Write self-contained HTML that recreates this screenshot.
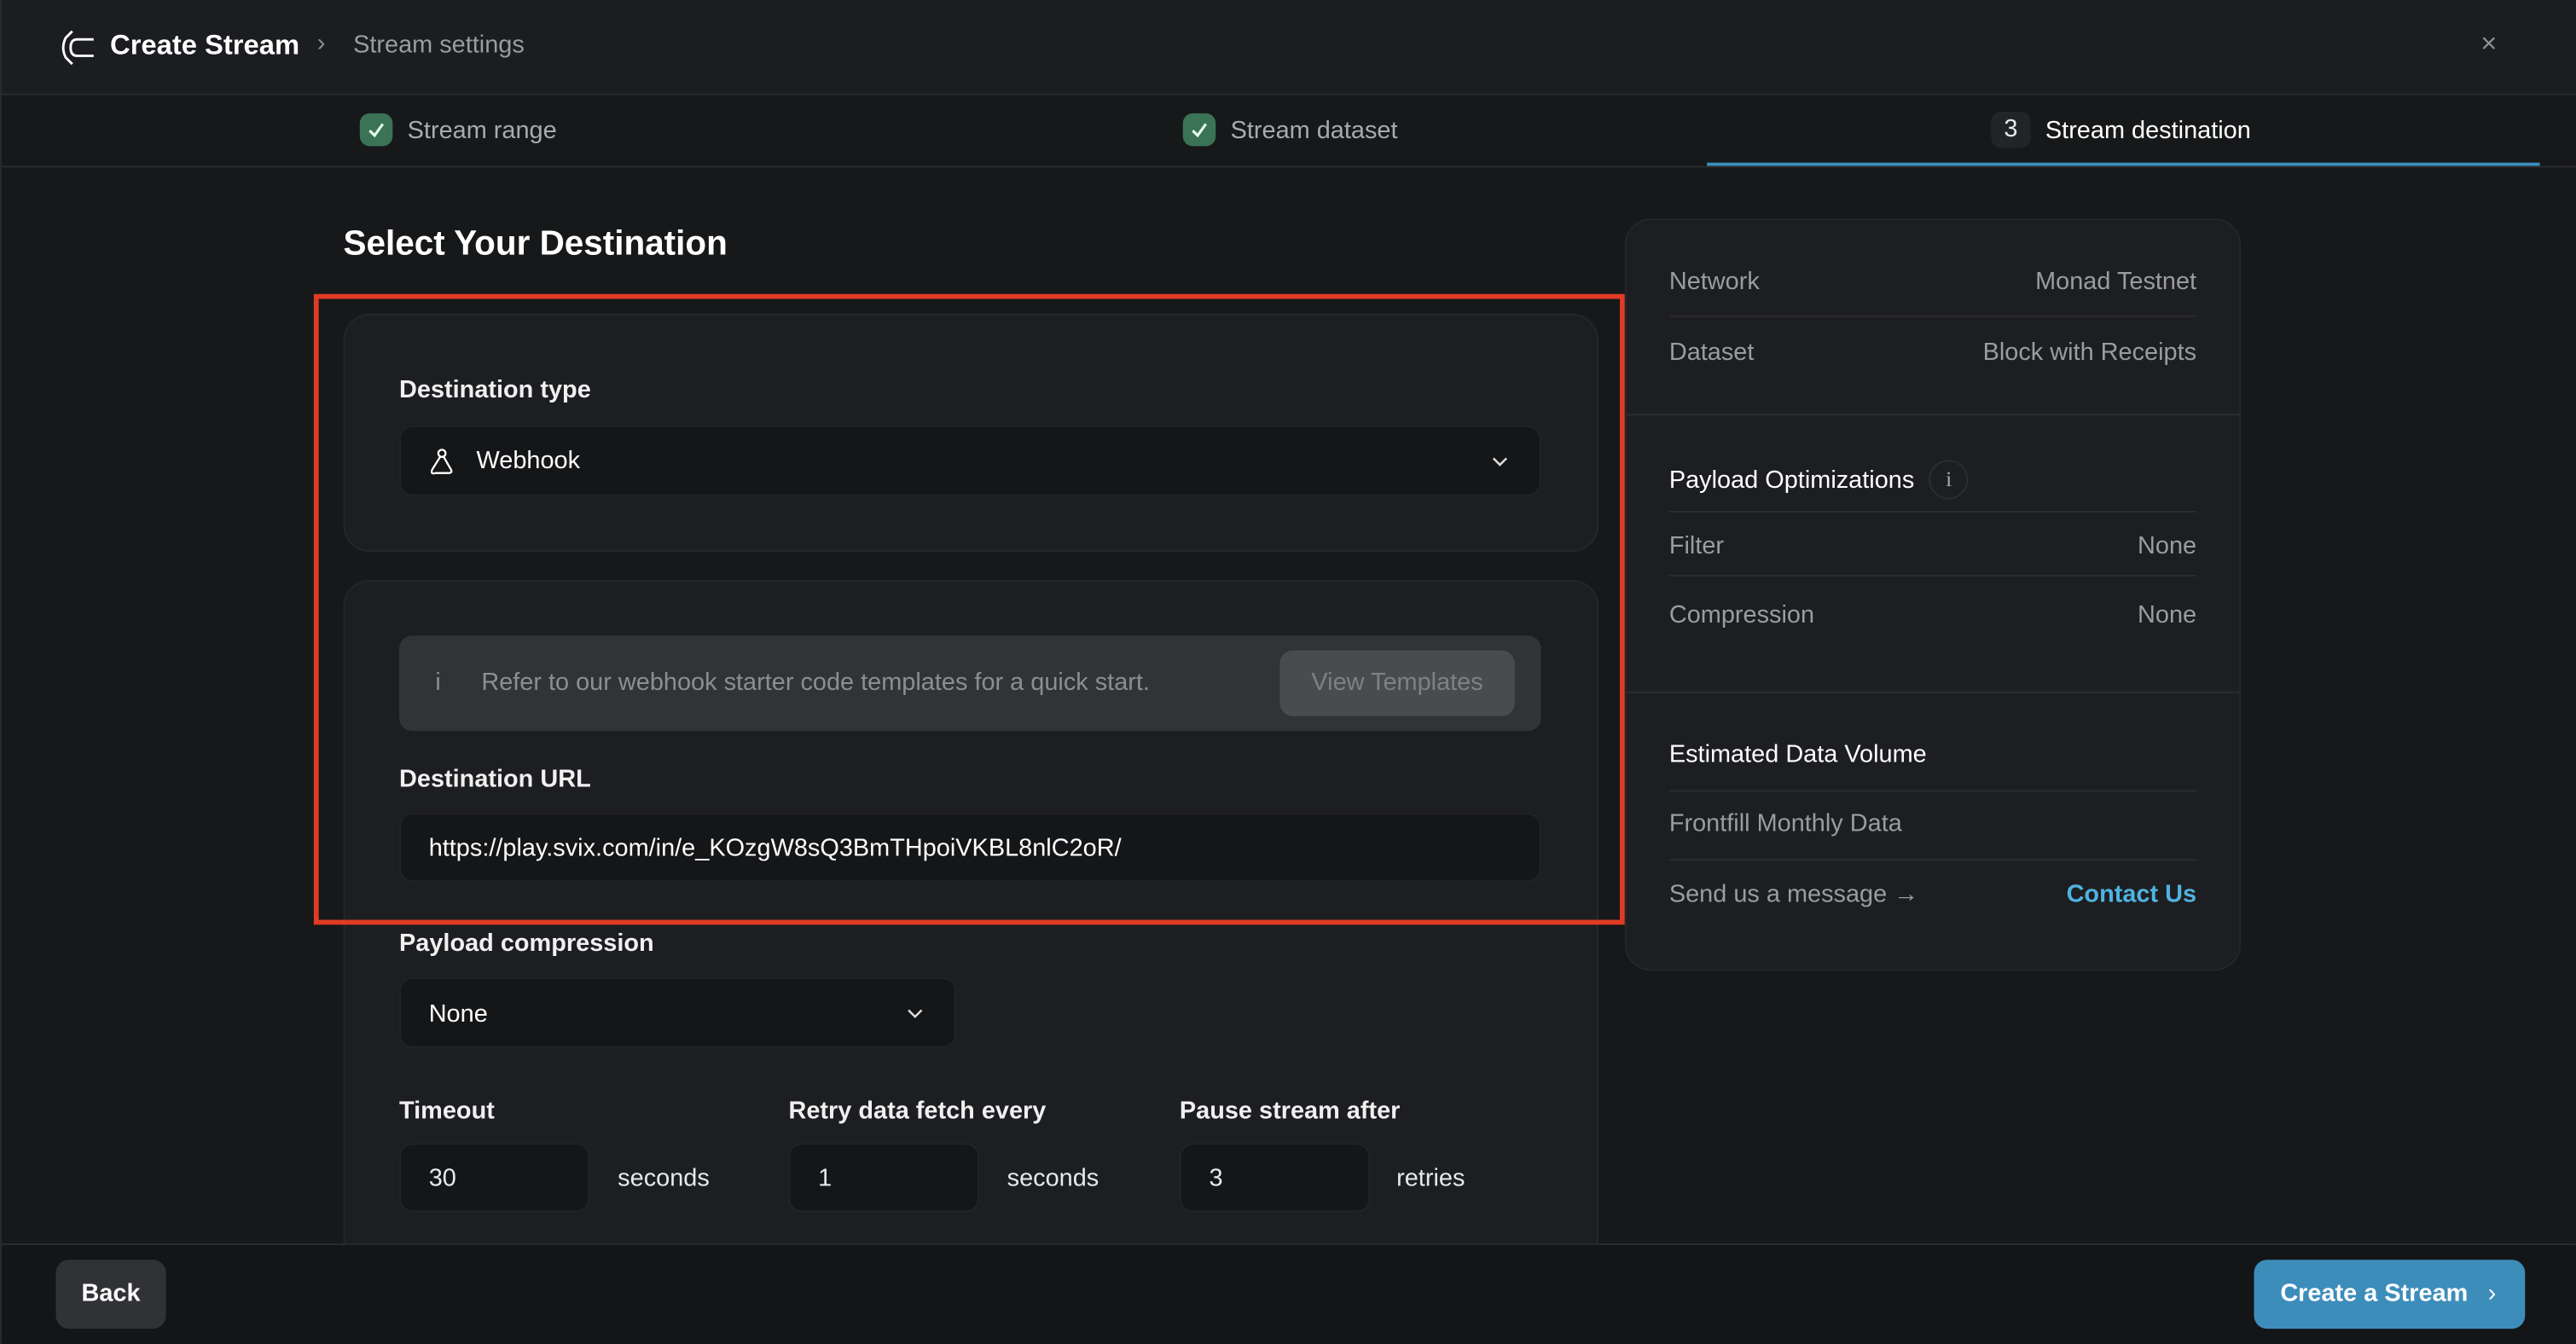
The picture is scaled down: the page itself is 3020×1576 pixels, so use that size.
<!DOCTYPE html>
<html><head><meta charset="utf-8"><style>
*{box-sizing:border-box;margin:0;padding:0}
html,body{width:3020px;height:1576px;overflow:hidden;background:#151618}
#w{position:absolute;left:0;top:0;width:1568px;height:818px;transform:scale(1.92602);transform-origin:0 0;background:#17181a;font-family:"Liberation Sans",sans-serif;color:#e8e9ea;overflow:hidden;border-left:1px solid #2a2b2e}
.a{position:absolute}
.hdr{left:0;top:0;width:1568px;height:58px;background:#1c1d20;border-bottom:1px solid #2a2b2e}
.steps{left:0;top:58px;width:1568px;height:44px;background:#17181a;border-bottom:1px solid #2a2b2e}
.card{background:#1d1e21;border:1px solid #252629;border-radius:16px}
.lbl{font-size:15px;font-weight:bold;color:#f0f0f0}
.inp{background:#151618;border:1px solid #222326;border-radius:8px}
.t15{font-size:15px}
.g{color:#9a9ca0}
.row{position:absolute;left:26px;right:26px;font-size:15px;display:flex;justify-content:space-between}
.hr{position:absolute;left:26px;right:26px;height:1px;background:#2c2d30}
.chk{width:20px;height:20px;border-radius:6px;background:#3a7355;display:inline-block;vertical-align:middle}
</style></head><body><div id="w">
<div class="a hdr">
 <svg class="a" style="left:34px;top:17px" width="24" height="24" viewBox="0 0 24 24" fill="none" stroke="#fff" stroke-width="1.5"><path d="M9 2 L5 6 Q2 12 5 18 L9 22"/><path d="M22 7 H12 Q8 7 8 12 Q8 17 12 17 H22"/></svg>
 <div class="a" style="left:66px;top:18px;font-size:17px;font-weight:bold;color:#fff">Create Stream</div>
 <div class="a" style="left:192px;top:18px;font-size:15px;color:#8d8f93">›</div>
 <div class="a" style="left:214px;top:19px;font-size:15px;color:#9a9ca0">Stream settings</div>
 <div class="a" style="left:1509px;top:17px;font-size:17px;color:#8d8f93">×</div>
</div>
<div class="a steps">
 <div class="a" style="left:218px;top:11px"><span class="chk"><svg width="20" height="20" viewBox="0 0 20 20"><path d="M6 10.5l3 3 5-7" stroke="#e6fff0" stroke-width="1.6" fill="none"/></svg></span><span class="t15 g" style="margin-left:9px;vertical-align:middle;color:#a8aaae">Stream range</span></div>
 <div class="a" style="left:719px;top:11px"><span class="chk"><svg width="20" height="20" viewBox="0 0 20 20"><path d="M6 10.5l3 3 5-7" stroke="#e6fff0" stroke-width="1.6" fill="none"/></svg></span><span class="t15 g" style="margin-left:9px;vertical-align:middle;color:#a8aaae">Stream dataset</span></div>
 <div class="a" style="left:1211px;top:10px;width:24px;height:22px;border-radius:6px;background:#232427;text-align:center;font-size:15px;line-height:22px">3</div>
 <div class="a t15" style="left:1244px;top:13px;color:#fff">Stream destination</div>
 <div class="a" style="left:1038px;top:41px;width:507px;height:2px;background:#3b8dbd"></div>
</div>
<div class="a" style="left:208px;top:137px;font-size:21px;font-weight:bold;color:#fff">Select Your Destination</div>
<div class="a card" style="left:208px;top:191px;width:764px;height:145px"></div>
<div class="a lbl" style="left:242px;top:229px">Destination type</div>
<div class="a inp" style="left:242px;top:259px;width:695px;height:43px">
 <svg class="a" style="left:16px;top:12px" width="18" height="18" viewBox="0 0 18 18" fill="none" stroke="#fff" stroke-width="1.2"><circle cx="9" cy="4" r="2.2"/><path d="M8 6 L3 14 M3 14 Q2 17 5 16 H13 M10 6 L14 13 Q16 16 13 16"/></svg>
 <div class="a t15" style="left:46px;top:12px;color:#fff">Webhook</div>
 <svg class="a" style="left:663px;top:15px" width="12" height="12" viewBox="0 0 12 12" fill="none" stroke="#ddd" stroke-width="1.3"><path d="M2 4l4 4 4-4"/></svg>
</div>
<div class="a card" style="left:208px;top:353px;width:764px;height:420px;border-bottom:none"></div>
<div class="a" style="left:242px;top:387px;width:695px;height:58px;background:#313437;border-radius:8px">
 <div class="a t15" style="left:22px;top:20px;color:#8c8e92">i</div>
 <div class="a t15" style="left:50px;top:20px;color:#8c8e92">Refer to our webhook starter code templates for a quick start.</div>
 <div class="a" style="left:536px;top:9px;width:143px;height:40px;background:#4a4b4d;border-radius:8px;text-align:center;line-height:40px;font-size:15px;color:#7e8084">View Templates</div>
</div>
<div class="a lbl" style="left:242px;top:466px">Destination URL</div>
<div class="a inp" style="left:242px;top:495px;width:695px;height:42px"><div class="a t15" style="left:17px;top:12px;color:#fff">https://play.svix.com/in/e_KOzgW8sQ3BmTHpoiVKBL8nlC2oR/</div></div>
<div class="a" style="left:190px;top:179px;width:798px;height:384px;border:3px solid #e03b24"></div>
<div class="a lbl" style="left:242px;top:566px">Payload compression</div>
<div class="a inp" style="left:242px;top:595px;width:339px;height:43px"><div class="a t15" style="left:17px;top:13px;color:#fff">None</div>
 <svg class="a" style="left:307px;top:15px" width="12" height="12" viewBox="0 0 12 12" fill="none" stroke="#ddd" stroke-width="1.3"><path d="M2 4l4 4 4-4"/></svg></div>
<div class="a lbl" style="left:242px;top:668px">Timeout</div>
<div class="a lbl" style="left:479px;top:668px">Retry data fetch every</div>
<div class="a lbl" style="left:717px;top:668px">Pause stream after</div>
<div class="a inp" style="left:242px;top:696px;width:116px;height:42px"><div class="a t15" style="left:17px;top:12px">30</div></div>
<div class="a t15" style="left:375px;top:709px">seconds</div>
<div class="a inp" style="left:479px;top:696px;width:116px;height:42px"><div class="a t15" style="left:17px;top:12px">1</div></div>
<div class="a t15" style="left:612px;top:709px">seconds</div>
<div class="a inp" style="left:717px;top:696px;width:116px;height:42px"><div class="a t15" style="left:17px;top:12px">3</div></div>
<div class="a t15" style="left:849px;top:709px">retries</div>
<div class="a card" style="left:988px;top:133px;width:375px;height:458px">
 <div class="row g" style="top:29px"><span>Network</span><span>Monad Testnet</span></div>
 <div class="hr" style="top:58px"></div>
 <div class="row g" style="top:72px"><span>Dataset</span><span>Block with Receipts</span></div>
 <div class="a" style="left:0;right:0;top:118px;height:1px;background:#2c2d30"></div>
 <div class="row" style="top:146px;justify-content:flex-start;color:#fff;align-items:center"><span>Payload Optimizations</span><span style="margin-left:9px;width:24px;height:24px;border:1px solid #2c2d30;border-radius:50%;text-align:center;line-height:22px;font-size:13px;color:#aaa;font-family:'Liberation Serif',serif">i</span></div>
 <div class="hr" style="top:177px"></div>
 <div class="row g" style="top:190px"><span>Filter</span><span>None</span></div>
 <div class="hr" style="top:216px"></div>
 <div class="row g" style="top:232px"><span>Compression</span><span>None</span></div>
 <div class="a" style="left:0;right:0;top:287px;height:1px;background:#2c2d30"></div>
 <div class="row" style="top:317px;color:#fff"><span>Estimated Data Volume</span></div>
 <div class="hr" style="top:347px"></div>
 <div class="row g" style="top:359px"><span>Frontfill Monthly Data</span></div>
 <div class="hr" style="top:389px"></div>
 <div class="row g" style="top:402px"><span>Send us a message →</span><span style="color:#4fb3e0;font-weight:bold">Contact Us</span></div>
</div>
<div class="a" style="left:0;top:757px;width:1568px;height:61px;background:#141517;border-top:1px solid #2a2b2e">
 <div class="a" style="left:33px;top:9px;width:67px;height:42px;background:#313235;border-radius:8px;text-align:center;line-height:42px;font-size:15px;font-weight:bold;color:#fff">Back</div>
 <div class="a" style="left:1371px;top:9px;width:165px;height:42px;background:#3d8dbb;border-radius:8px;line-height:42px;font-size:15px;font-weight:bold;color:#fff;padding-left:16px">Create a Stream <span style="margin-left:8px;font-weight:normal">›</span></div>
</div>
</div></body></html>
